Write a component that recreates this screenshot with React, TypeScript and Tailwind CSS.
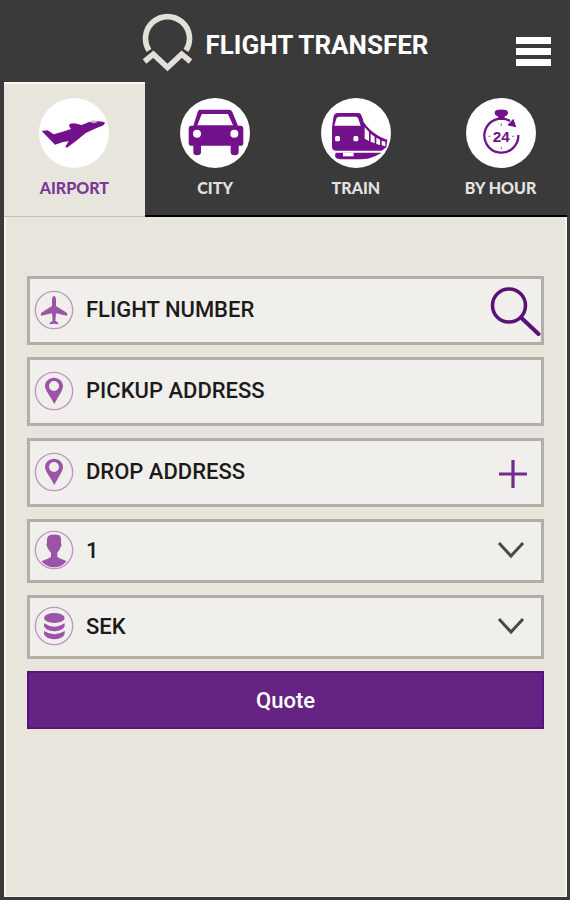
import { useState } from 'react'
import type { ReactNode } from 'react'

const AirportIcon = () => (
  <svg className="w-full h-full" viewBox="0 0 210 210" fill="#72118a" aria-hidden="true">
    <path d="M8 99 L26 97 L44 109 L66 103 L96 93 L90 83 L93 77 L106 76 L128 81 L148 73 C162 68 182 70 197 73 C199 80 190 85 178 88 L140 105 L112 128 L84 149 L79 146 L89 130 L72 132 L48 140 Z" />
    <path d="M152 73 C158 66 168 66 176 72 L166 76 Z" fill="#b9bdb9" />
  </svg>
)

const CityIcon = () => (
  <svg className="w-full h-full" viewBox="0 0 210 210" fill="#72118a" aria-hidden="true">
    <path d="M60 35 H146 Q154 35 157 42 L174 83 H184 Q190 84 190 92 V134 Q190 143 184 143 H176 V162 Q176 172 164 172 Q152 172 152 162 V143 H63 V162 Q63 172 51 172 Q40 172 40 162 V143 H32 Q26 143 26 134 V92 Q26 84 32 83 H40 L53 42 Q55 35 60 35 Z" />
    <path d="M68 48 H144 L159 82 H52 L64 51 Q65 48 68 48 Z" fill="#fff" />
    <circle cx="51" cy="107" r="12" fill="#fff" />
    <circle cx="163" cy="107" r="12" fill="#fff" />
  </svg>
)

const TrainIcon = () => (
  <svg className="w-full h-full" viewBox="0 0 210 210" fill="#72118a" aria-hidden="true">
    <path d="M48 45 H114 Q120 46 123 56 L128 72 C138 88 152 100 164 108 C176 117 188 122 199 125 L196 148 L182 158 H44 Q33 156 33 147 V88 L38 54 Q40 46 48 45 Z" />
    <path d="M44 164 H182 L164 174 C150 180 136 184 120 184 H56 Q44 182 42 174 Z" />
    <path d="M54 56 H106 Q110 57 112 62 L119 83 H40 L46 62 Q48 56 54 56 Z" fill="#fff" />
    <rect x="42" y="114" width="15" height="16" rx="5" fill="#fff" />
    <rect x="97" y="114" width="15" height="16" rx="5" fill="#fff" />
    <path d="M131 88 L144 102 V129 L131 122 Z M149 107 L161 116 V136 L149 131 Z M166 119 L177 125 V141 L166 138 Z M182 128 L193 131 V145 L182 142 Z" fill="#fff" />
    <rect x="66" y="164" width="32" height="11" fill="#fff" />
  </svg>
)

const HourIcon = () => (
  <svg className="w-full h-full" viewBox="0 0 210 210" fill="#72118a" aria-hidden="true">
    <path d="M157 111 A51 51 0 1 1 132 69" fill="none" stroke="#72118a" strokeWidth="7" />
    <path d="M92 36 Q106 33 120 36 Q126 38 126 44 Q126 52 117 54 L114 66 H98 L95 54 Q86 52 86 44 Q86 38 92 36 Z" />
    <path d="M142 62 L151 88 L124 82 Z" />
    <path d="M106 76 V84 M106 146 V154 M67 115 H74 M138 115 H145" stroke="#b48cc2" strokeWidth="4" />
    <text x="106" y="131" textAnchor="middle" fontSize="46" className="font-bold font-['Liberation_Sans',sans-serif]">24</text>
  </svg>
)

const RoundIcon = ({ children }: { children: ReactNode }) => (
  <svg className="w-10 h-10 shrink-0" viewBox="0 0 120 120" fill="#9c54a8" aria-hidden="true">
    <circle cx="60" cy="60" r="56" fill="none" stroke="#bf93c8" strokeWidth="4" />
    {children}
  </svg>
)

const PlaneGlyph = () => (
  <path d="M60 17 Q66 19 66 28 V48 L98 68 Q102 74 98 77 L66 70 L64 92 L73 98 V103 L60 101 L47 103 V98 L56 92 L54 70 L22 77 Q18 74 22 68 L54 48 V28 Q54 19 60 17 Z" />
)

const PinGlyph = () => (
  <path
    fillRule="evenodd"
    d="M60 20 C75 20 87 31 87 45 C87 58 73 76 61 99 C49 76 33 58 33 45 C33 31 45 20 60 20 Z M60 30 A15 15 0 1 0 60 60 A15 15 0 1 0 60 30 Z"
  />
)

const PersonGlyph = () => (
  <path d="M46 16 Q60 11 76 16 Q83 22 81 38 Q85 44 80 52 Q76 63 70 68 V80 C78 87 90 88 98 94 Q82 112 60 112 Q38 112 22 94 C32 88 43 87 51 80 V68 Q44 63 40 52 Q35 44 39 38 Q37 22 46 16 Z" />
)

const CoinsGlyph = () => (
  <>
    <ellipse cx="61" cy="36" rx="31" ry="15" />
    <path d="M30 52 Q61 72 92 52 V61 Q87 75 61 76 Q35 75 30 61 Z" />
    <path d="M30 75 Q61 95 92 75 V84 Q87 99 61 100 Q35 99 30 84 Z" />
  </>
)

const Chevron = () => (
  <svg className="absolute right-4 w-7 h-5 pointer-events-none" viewBox="0 0 28 20" fill="none" aria-hidden="true">
    <path d="M2 3 L14 16 L26 3" stroke="#4a4848" strokeWidth="3" />
  </svg>
)

const tabs = [
  { id: 'airport', label: 'AIRPORT', icon: <AirportIcon /> },
  { id: 'city', label: 'CITY', icon: <CityIcon /> },
  { id: 'train', label: 'TRAIN', icon: <TrainIcon /> },
  { id: 'hour', label: 'BY HOUR', icon: <HourIcon /> },
]

const fieldBox = 'relative flex items-center border-[3px] border-[#b0afaa] bg-[#f1efeb] pb-[2px] pl-1'
const fieldText =
  'h-full min-w-0 flex-1 appearance-none bg-transparent pl-3 text-[22px] font-medium text-[#1c1b1b] outline-none placeholder:text-[#1c1b1b]'

export default function App() {
  const [active, setActive] = useState('airport')
  const [flight, setFlight] = useState('')

  return (
    <div className="flex min-h-screen flex-col bg-[#3a3a3a] pr-[3px] pb-[3px] pl-1 font-['Roboto',sans-serif]">
      {/* Header */}
      <header className="relative flex h-[82px] items-center justify-center pt-1">
        <div className="flex items-end gap-3">
          <svg className="w-[51px] h-[60px]" viewBox="142 13 51 60" fill="none" stroke="#e3e0da" strokeWidth="5.6" aria-hidden="true">
            <path d="M149 50.5 A22 22 0 1 1 186 50.5" />
            <path d="M144.5 61.5 L153.3 54.2 L167.5 67.5 L181.7 54.2 L190.5 61.5" />
          </svg>
          <h1 className="text-[26px] leading-[56px] font-bold text-white">FLIGHT TRANSFER</h1>
        </div>
        <button type="button" aria-label="Menu" className="absolute right-4 bottom-4 flex flex-col gap-1">
          <span className="h-[7px] w-[35px] bg-white" />
          <span className="h-[7px] w-[35px] bg-white" />
          <span className="h-[7px] w-[35px] bg-white" />
        </button>
      </header>

      {/* Transfer types */}
      <nav className="grid h-[135px] grid-cols-4">
        {tabs.map((tab, i) => (
          <button
            key={tab.id}
            type="button"
            onClick={() => setActive(tab.id)}
            className={`flex flex-col items-center pt-[14px] border-t-2 ${i === 3 ? 'pl-2' : ''} ${
              active === tab.id
                ? 'border-t-[#f8f7f3] border-b border-b-[#c4c1b8] bg-[#e8e5dd] text-[#783a94]'
                : 'border-t-transparent border-b-2 border-b-black text-[#e4e3e1]'
            }`}
          >
            <span className="h-[70px] w-[70px] rounded-full bg-white">{tab.icon}</span>
            <span className="mt-3 text-[16px] leading-4 font-black font-['Lato',sans-serif]">{tab.label}</span>
          </button>
        ))}
      </nav>

      {/* Booking form */}
      <main className="flex-1 border-x-2 border-b border-[#f6f4ef] bg-[#e8e5dd] px-[21px] pt-[59px]">
        <form className="flex flex-col gap-3" onSubmit={e => e.preventDefault()}>
          <div className={`${fieldBox} h-[69px]`}>
            <RoundIcon><PlaneGlyph /></RoundIcon>
            <input
              aria-label="Flight number"
              placeholder="FLIGHT NUMBER"
              value={flight}
              onChange={e => setFlight(e.target.value)}
              className={fieldText}
            />
            <button type="button" aria-label="Search flight" className="shrink-0">
              <svg className="w-[52px] h-[52px]" viewBox="0 0 52 52" fill="none" stroke="#5b1178" aria-hidden="true">
                <circle cx="20" cy="21.5" r="16.5" strokeWidth="3.5" />
                <path d="M32 33.5 L49.5 50" strokeWidth="4" strokeLinecap="round" />
              </svg>
            </button>
          </div>

          <div className={`${fieldBox} h-[69px]`}>
            <RoundIcon><PinGlyph /></RoundIcon>
            <input aria-label="Pickup address" placeholder="PICKUP ADDRESS" className={fieldText} />
          </div>

          <div className={`${fieldBox} h-[69px]`}>
            <RoundIcon><PinGlyph /></RoundIcon>
            <input aria-label="Drop address" placeholder="DROP ADDRESS" className={fieldText} />
            <button type="button" aria-label="Add stop" className="mr-3 shrink-0">
              <svg className="w-8 h-8" viewBox="0 0 32 32" fill="none" stroke="#6f2b8e" strokeWidth="3.2" aria-hidden="true">
                <path d="M16 4 V32 M2 18 H30" />
              </svg>
            </button>
          </div>

          <div className={`${fieldBox} h-16`}>
            <RoundIcon><PersonGlyph /></RoundIcon>
            <select aria-label="Passengers" className={fieldText}>
              <option>1</option>
              <option>2</option>
              <option>3</option>
              <option>4</option>
            </select>
            <Chevron />
          </div>

          <div className={`${fieldBox} h-16`}>
            <RoundIcon><CoinsGlyph /></RoundIcon>
            <select aria-label="Currency" className={fieldText}>
              <option>SEK</option>
              <option>EUR</option>
              <option>USD</option>
            </select>
            <Chevron />
          </div>

          <button type="submit" className="h-[58px] border-2 border-[#5c1180] bg-[#662482] text-[22px] font-medium text-white">
            Quote
          </button>
        </form>
      </main>
    </div>
  )
}
